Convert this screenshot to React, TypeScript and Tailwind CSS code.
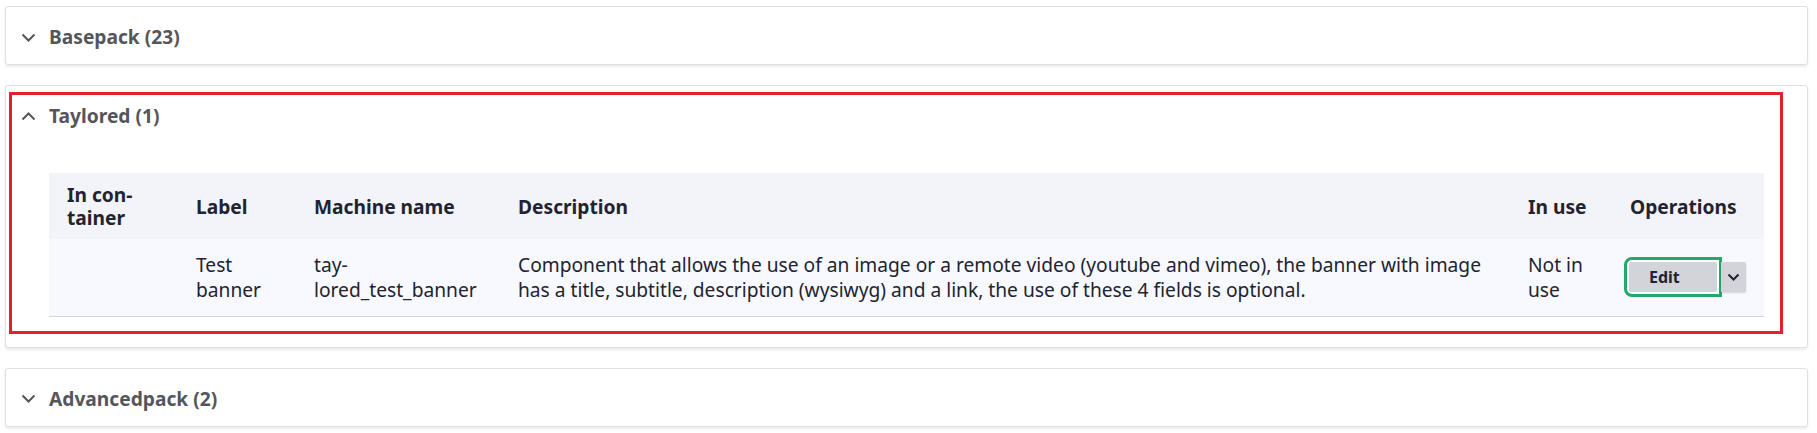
import { ReactNode } from 'react'

const font = { fontFamily: '"Noto Sans", "Liberation Sans", sans-serif' }

function Chevron({ up = false }: { up?: boolean }) {
  return (
    <svg width="15" height="9" viewBox="0 0 15 9" className="shrink-0">
      <path
        d={up ? 'M1.5 7.5 L7.5 1.5 L13.5 7.5' : 'M1.5 1.5 L7.5 7.5 L13.5 1.5'}
        fill="none"
        stroke="#55565b"
        strokeWidth="2"
      />
    </svg>
  )
}

function Card({ title, open = false, children }: { title: string; open?: boolean; children?: ReactNode }) {
  return (
    <div className="relative bg-white border border-[#dedfe4] rounded-[3px] shadow-[0_2px_3px_rgba(0,0,0,0.08)]">
      <div className="flex items-center gap-[13px] pl-[15px] pt-[18px] pb-[15px]">
        <Chevron up={open} />
        <span className="text-[19.2px] leading-[24px] font-bold text-[#55565b]">{title}</span>
      </div>
      {children}
    </div>
  )
}

export default function App() {
  const th = 'pl-[18px] pr-[18px] py-[10px] text-left align-middle font-bold text-[19.2px] leading-[23px] text-[#222330]'
  const tdText = 'py-[13px] align-middle text-[19.2px] leading-[25px] text-[#222330]'
  const td = `pl-[18px] pr-[18px] ${tdText}`

  return (
    <div className="min-h-screen bg-white pl-[5px] pr-[9px] pt-[6px]" style={font}>
      <div className="flex flex-col gap-[20px]">
        <Card title="Basepack (23)" />

        <Card title="Taylored (1)" open>
          <div className="px-[43px] pt-[30px] pb-[30px]">
            <table className="w-full table-fixed border-collapse">
              <colgroup>
                <col className="w-[129px]" />
                <col className="w-[118px]" />
                <col className="w-[204px]" />
                <col />
                <col className="w-[102px]" />
                <col className="w-[152px]" />
              </colgroup>
              <thead>
                <tr className="bg-[#f3f4f9] h-[66px]">
                  <th className={th}>
                    In con-
                    <br />
                    tainer
                  </th>
                  <th className={th}>Label</th>
                  <th className={th}>Machine name</th>
                  <th className={th}>Description</th>
                  <th className={th}>In use</th>
                  <th className={th}>Operations</th>
                </tr>
              </thead>
              <tbody>
                <tr className="bg-[#f7f9fe] border-b border-[#d4d5db] h-[77px]">
                  <td className={td}></td>
                  <td className={td}>Test banner</td>
                  <td className={td}>
                    tay-
                    <br />
                    lored_test_banner
                  </td>
                  <td className={td}>
                    Component that allows the use of an image or a remote video (youtube and vimeo), the banner with
                    image has a title, subtitle, description (wysiwyg) and a link, the use of these 4 fields is
                    optional.
                  </td>
                  <td className={td}>Not in use</td>
                  <td className={`pl-[12px] pr-0 ${tdText}`}>
                    <div className="flex items-center">
                      <span className="border-[3px] border-[#26a769] rounded-l-[8px] bg-white p-[2px]">
                        <button className="flex items-center h-[30px] w-[88px] pl-[20px] bg-[#d3d4d9] text-[16px] font-bold text-[#222330] rounded-[2px]">
                          Edit
                        </button>
                      </span>
                      <button className="flex items-center justify-center h-[30px] w-[25px] -ml-[1px] bg-[#d3d4d9] shadow-[0_1px_2px_rgba(0,0,0,0.15)] rounded-r-[2px]">
                        <svg width="13" height="8" viewBox="0 0 13 8">
                          <path d="M1.5 1.5 L6.5 6.5 L11.5 1.5" fill="none" stroke="#222330" strokeWidth="2" />
                        </svg>
                      </button>
                    </div>
                  </td>
                </tr>
              </tbody>
            </table>
          </div>
          {/* highlight annotation */}
          <div className="pointer-events-none absolute left-[3px] top-[6px] right-[24px] bottom-[13px] border-[3px] border-[#e3202e]" />
        </Card>

        <Card title="Advancedpack (2)" />
      </div>
    </div>
  )
}
